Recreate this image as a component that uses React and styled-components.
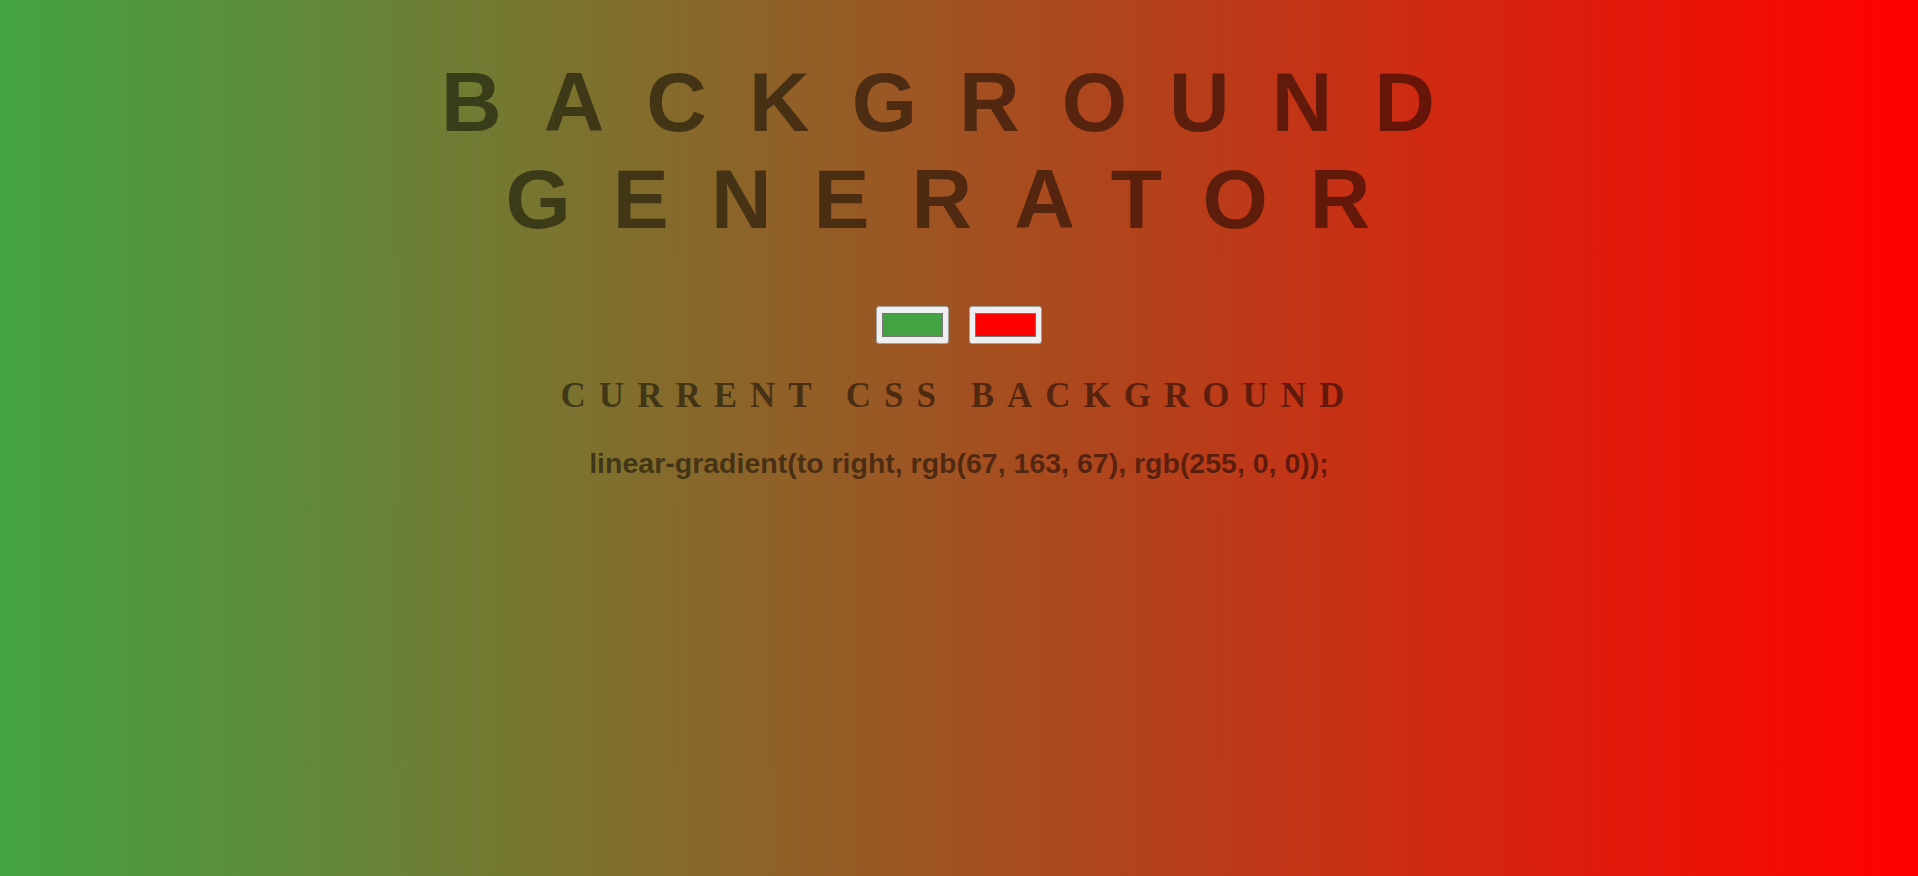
import React, { useState } from 'react';
import styled, { createGlobalStyle } from 'styled-components';

const GlobalStyle = createGlobalStyle`
  html, body {
    margin: 0;
    min-height: 100%;
  }
  body {
    background: ${(props) => props.bg};
    font-family: "Liberation Sans", Arial, sans-serif;
  }
`;

const Page = styled.div`
  display: flex;
  flex-direction: column;
  align-items: center;
  text-align: center;
  min-height: 100vh;
  padding: 54px 8px 0;
  box-sizing: border-box;
`;

const Title = styled.h1`
  margin: 0;
  font-family: "Liberation Sans", Arial, sans-serif;
  font-size: 84px;
  font-weight: 700;
  letter-spacing: 0.5em;
  color: rgba(0, 0, 0, 0.5);
`;

const Pickers = styled.div`
  display: flex;
  gap: 20px;
  margin-top: 58px;
`;

const ColorInput = styled.input`
  width: 73px;
  height: 38px;
  margin: 0;
  padding: 1px 2px;
  box-sizing: border-box;
  border: 1px solid #a0a0a0;
  border-radius: 3px;
  background: #efefef;
  cursor: pointer;

  &::-webkit-color-swatch-wrapper {
    padding: 5px 3px;
  }

  &::-webkit-color-swatch {
    border: 1px solid #777;
    border-radius: 0;
  }
`;

const Subtitle = styled.h3`
  margin: 32px 0 0;
  font-family: "Liberation Serif", "Times New Roman", serif;
  font-size: 35px;
  font-weight: 700;
  letter-spacing: 13px;
  color: rgba(0, 0, 0, 0.5);
`;

const Code = styled.h3`
  margin: 31px 0 0;
  font-family: "Liberation Sans", Arial, sans-serif;
  font-size: 28.5px;
  font-weight: 700;
  color: rgba(0, 0, 0, 0.5);
`;

const toRgb = (hex) => {
  const n = parseInt(hex.slice(1), 16);
  return `rgb(${(n >> 16) & 255}, ${(n >> 8) & 255}, ${n & 255})`;
};

export default function App() {
  const [left, setLeft] = useState('#43a343');
  const [right, setRight] = useState('#ff0000');
  const bg = `linear-gradient(to right, ${toRgb(left)}, ${toRgb(right)})`;

  return (
    <>
      <GlobalStyle bg={bg} />
      <Page>
        <Title>BACKGROUND GENERATOR</Title>
        <Pickers>
          <ColorInput type="color" value={left} onChange={(e) => setLeft(e.target.value)} />
          <ColorInput type="color" value={right} onChange={(e) => setRight(e.target.value)} />
        </Pickers>
        <Subtitle>CURRENT CSS BACKGROUND</Subtitle>
        <Code>{bg};</Code>
      </Page>
    </>
  );
}
